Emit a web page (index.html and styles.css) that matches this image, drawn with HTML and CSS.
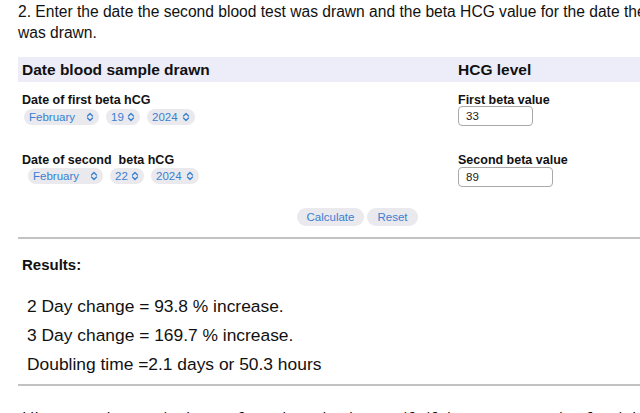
FILE: index.html
```html
<!DOCTYPE html>
<html>
<head>
<meta charset="utf-8">
<link rel="stylesheet" href="styles.css">
</head>
<body>
<div class="page">
  <p class="intro">2. Enter the date the second blood test was drawn and the beta HCG value for the date the test<br>was drawn.</p>
  <div class="band">
    <div>Date blood sample drawn</div>
    <div>HCG level</div>
  </div>
  <div class="row first">
    <div class="cell">
      <div class="label">Date of first beta hCG</div>
      <div class="pills">
        <span class="pill w-month">February<svg class="chev" viewBox="0 0 8 10"><path d="M1.5 4 L4 1.5 L6.5 4 M1.5 6 L4 8.5 L6.5 6"/></svg></span>
        <span class="pill w-day">19<svg class="chev" viewBox="0 0 8 10"><path d="M1.5 4 L4 1.5 L6.5 4 M1.5 6 L4 8.5 L6.5 6"/></svg></span>
        <span class="pill w-year">2024<svg class="chev" viewBox="0 0 8 10"><path d="M1.5 4 L4 1.5 L6.5 4 M1.5 6 L4 8.5 L6.5 6"/></svg></span>
      </div>
    </div>
    <div class="cell">
      <div class="label">First beta value</div>
      <div class="input w1">33</div>
    </div>
  </div>
  <div class="row second">
    <div class="cell">
      <div class="label">Date of second&nbsp; beta hCG</div>
      <div class="pills indent">
        <span class="pill w-month">February<svg class="chev" viewBox="0 0 8 10"><path d="M1.5 4 L4 1.5 L6.5 4 M1.5 6 L4 8.5 L6.5 6"/></svg></span>
        <span class="pill w-day">22<svg class="chev" viewBox="0 0 8 10"><path d="M1.5 4 L4 1.5 L6.5 4 M1.5 6 L4 8.5 L6.5 6"/></svg></span>
        <span class="pill w-year">2024<svg class="chev" viewBox="0 0 8 10"><path d="M1.5 4 L4 1.5 L6.5 4 M1.5 6 L4 8.5 L6.5 6"/></svg></span>
      </div>
    </div>
    <div class="cell">
      <div class="label">Second beta value</div>
      <div class="input w2">89</div>
    </div>
  </div>
  <div class="buttons">
    <span class="btn">Calculate</span>
    <span class="btn">Reset</span>
  </div>
  <hr class="rule top">
  <div class="results-title">Results:</div>
  <div class="results">
    <div>2 Day change = 93.8 % increase.</div>
    <div>3 Day change = 169.7 % increase.</div>
    <div>Doubling time =2.1 days or 50.3 hours</div>
  </div>
  <hr class="rule bottom">
  <p class="note">Ultrasound exam is the preferred method to verify if the pregnancy is of a viable intrauterine pregnancy.</p>
</div>
</body>
</html>
```
FILE: styles.css
```css
html, body {
  margin: 0;
  padding: 0;
  overflow: hidden;
  background: #fff;
}
body {
  font-family: "Liberation Sans", Arial, sans-serif;
  color: #111;
  width: 640px;
  height: 413px;
}
.page {
  margin-left: 18px;
  width: 678px;
  padding-top: 1px;
}
.intro {
  margin: 0;
  font-size: 15.6px;
  line-height: 21px;
  white-space: nowrap;
}
.band {
  margin-top: 14px;
  height: 25px;
  background: #ededf9;
  display: grid;
  grid-template-columns: 436px 1fr;
  padding-left: 4px;
  align-items: center;
  font-weight: bold;
  font-size: 15.5px;
}
.row {
  display: grid;
  grid-template-columns: 436px 1fr;
  padding-left: 4px;
}
.row.first { margin-top: 11px; }
.row.second { margin-top: 27px; }
.label {
  font-weight: bold;
  font-size: 12.5px;
  line-height: 15px;
}
.pills {
  display: flex;
  gap: 7px;
  margin-top: 1px;
  margin-left: 2px;
}
.pills.indent { margin-left: 6px; margin-top: 0; }
.pill {
  display: inline-flex;
  align-items: center;
  justify-content: space-between;
  box-sizing: border-box;
  height: 16px;
  border-radius: 8px;
  background: #e9e9ee;
  color: #3a80d0;
  font-size: 11.5px;
  padding: 0 5px 0 5px;
}
.w-month { width: 75px; }
.w-day { width: 34px; }
.w-year { width: 48px; }
.chev {
  width: 8px;
  height: 10px;
  fill: none;
  stroke: #3a80d0;
  stroke-width: 1.4;
  stroke-linecap: round;
  stroke-linejoin: round;
}
.input {
  box-sizing: border-box;
  height: 20px;
  border: 1px solid #a9a9a9;
  border-radius: 4px;
  font-size: 11.5px;
  line-height: 18px;
  padding-left: 7px;
  color: #222;
}
.row.first .input { margin-top: -2px; }
.row.second .input { margin-top: -1px; }
.w1 { width: 75px; }
.w2 { width: 95px; }
.buttons {
  margin-top: 21px;
  display: flex;
  justify-content: center;
  gap: 3px;
}
.btn {
  box-sizing: border-box;
  height: 18px;
  line-height: 18px;
  border-radius: 9px;
  background: #e9e9ee;
  color: #3a80d0;
  font-size: 11.5px;
  padding: 0 10px;
}
.rule {
  border: none;
  height: 2px;
  background: #c2c2c2;
  margin: 0;
}
.rule.top { margin-top: 11px; }
.results-title {
  margin-top: 17px;
  font-weight: bold;
  font-size: 15px;
  line-height: 18px;
  padding-left: 4px;
}
.results {
  margin-top: 18px;
  font-size: 17.4px;
  line-height: 29px;
  padding-left: 9px;
}
.rule.bottom { margin-top: 5px; }
.note {
  margin: 22px 0 0 4px;
  font-size: 17px;
  line-height: 20px;
  white-space: nowrap;
  font-family: "Open Sans", "Liberation Sans", sans-serif;
}
```
